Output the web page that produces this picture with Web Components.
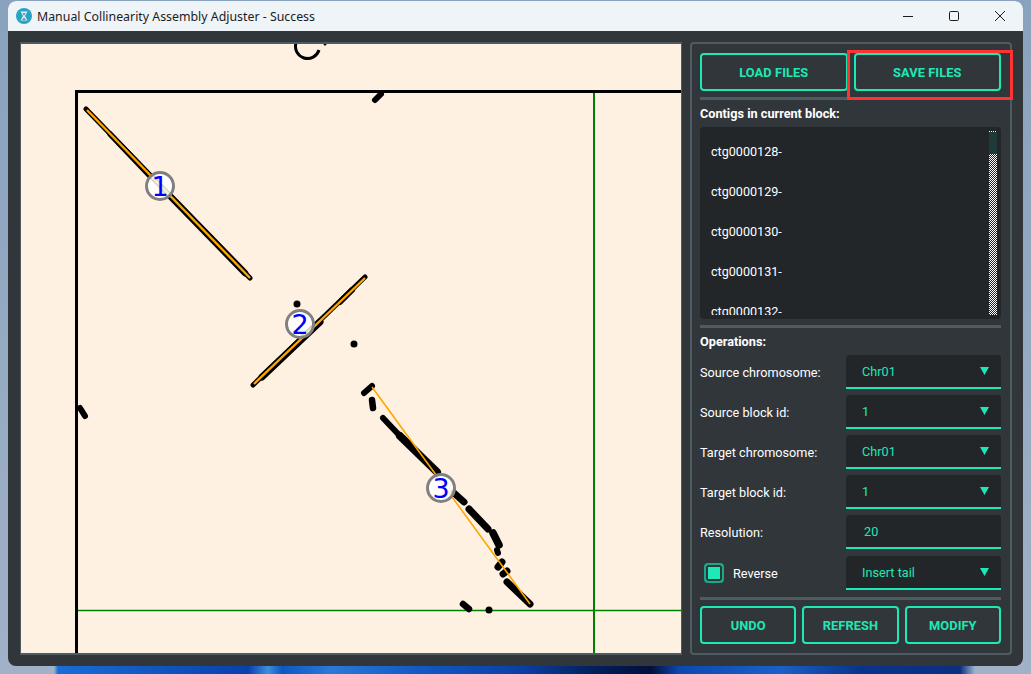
<!DOCTYPE html>
<html>
<head>
<meta charset="utf-8">
<title>Manual Collinearity Assembly Adjuster</title>
<style>
    html, body { margin: 0; height: 100%; overflow: hidden; }
    body {
        background:
            linear-gradient(90deg, transparent 54px, #1a6cd6 58px, #0f50bc 180px, #0a3fae 248px, #3d8fdc 268px, #0f56c4 282px, #2a78d8 330px, #1258c4 420px, #0b3fa8 520px, #04205f 590px, #020f3a 650px, #0d48b2 680px, #1a60c8 780px, #0a338c 860px, #0a2f80 960px, transparent 975px) 0 100% / 100% 8px no-repeat,
            linear-gradient(#89a2bd, #a0b1c8);
        font-family: Roboto, "Liberation Sans", sans-serif;
    }
</style>
</head>
<body>
<app-window>
    <span slot="title">Manual Collinearity Assembly Adjuster - Success</span>
    <plot-canvas slot="plot"></plot-canvas>
    <side-panel slot="panel">
        <div class="btn-row top">
            <md-button>LOAD FILES</md-button>
            <md-button>SAVE FILES</md-button>
        </div>
        <panel-rule></panel-rule>
        <panel-label>Contigs in current block:</panel-label>
        <contig-list>
            <contig-item>ctg0000128-</contig-item>
            <contig-item>ctg0000129-</contig-item>
            <contig-item>ctg0000130-</contig-item>
            <contig-item>ctg0000131-</contig-item>
            <contig-item>ctg0000132-</contig-item>
        </contig-list>
        <panel-rule></panel-rule>
        <panel-label>Operations:</panel-label>
        <form-row label="Source chromosome:"><md-combo value="Chr01"></md-combo></form-row>
        <form-row label="Source block id:"><md-combo value="1"></md-combo></form-row>
        <form-row label="Target chromosome:"><md-combo value="Chr01"></md-combo></form-row>
        <form-row label="Target block id:"><md-combo value="1"></md-combo></form-row>
        <form-row label="Resolution:"><md-input value="20"></md-input></form-row>
        <form-row class="last"><md-check slot="label">Reverse</md-check><md-combo value="Insert tail"></md-combo></form-row>
        <panel-rule></panel-rule>
        <div class="btn-row bottom">
            <md-button>UNDO</md-button>
            <md-button>REFRESH</md-button>
            <md-button>MODIFY</md-button>
        </div>
    </side-panel>
</app-window>

<script>
class AppWindow extends HTMLElement {
    constructor() {
        super();
        const shadowRoot = this.attachShadow({ mode: "open" });
        shadowRoot.innerHTML = `
            <style>
                :host {
                    display: flex;
                    flex-direction: column;
                    box-sizing: border-box;
                    width: 1015px;
                    height: 665px;
                    margin: 1px 0 0 8px;
                    border-radius: 8px;
                    overflow: hidden;
                    background: #31363b;
                }
                header {
                    flex: none;
                    display: flex;
                    align-items: center;
                    height: 30px;
                    background: #eff4f9;
                    color: #1c1c1c;
                    font: 12.35px "Noto Sans", "Open Sans", sans-serif;
                }
                .icon { margin: 0 5px 0 8px; flex: none; }
                .name { flex: 1; white-space: nowrap; }
                .ctl { display: flex; align-items: center; }
                .ctl div { width: 46px; height: 30px; display: flex; align-items: center; justify-content: center; }
                main {
                    flex: 1;
                    min-height: 0;
                    display: flex;
                    gap: 8px;
                    padding: 11px 11px 11px 12px;
                }
            </style>
            <header>
                <svg class="icon" width="16" height="16" viewBox="0 0 16 16">
                    <circle cx="8" cy="8" r="8" fill="#27a3c4"/>
                    <path d="M4.5 3.5h7L9 8l2.5 4.5h-7L7 8z" fill="#dff1f6"/>
                    <path d="M6.5 5h3L8 8z M8 9.5l2 2.5H6z" fill="#6f8fa8"/>
                </svg>
                <div class="name"><slot name="title"></slot></div>
                <div class="ctl">
                    <div><svg width="12" height="12" viewBox="0 0 12 12"><path d="M1 6.5h10" stroke="#1c1c1c" fill="none"/></svg></div>
                    <div><svg width="12" height="12" viewBox="0 0 12 12"><rect x="1.5" y="1.5" width="9" height="9" rx="1.2" stroke="#1c1c1c" fill="none"/></svg></div>
                    <div><svg width="12" height="12" viewBox="0 0 12 12"><path d="M1 1l10 10M11 1L1 11" stroke="#1c1c1c" fill="none"/></svg></div>
                </div>
            </header>
            <main>
                <slot name="plot"></slot>
                <slot name="panel"></slot>
            </main>
        `;
    }
}

class PlotCanvas extends HTMLElement {
    constructor() {
        super();
        const shadowRoot = this.attachShadow({ mode: "open" });
        const black = [
            [86, 109, 250, 278, 5], [170, 196, 245, 273, 6.5], [110, 134, 150, 176, 5.5],
            [253, 385, 365, 277, 5], [262, 377, 320, 322, 7], [340, 302, 352, 290, 6],
            [364, 393, 372, 386, 6], [372, 400, 373, 408, 6.5], [383, 418, 400, 436, 6], [400, 436, 437, 472, 8],
            [454, 493, 464, 502, 7], [469, 509, 488, 529, 7], [493, 533, 499, 545, 7.5],
            [497, 550, 498, 553, 6], [502, 562, 498, 567, 7], [507, 571, 503, 574, 7],
            [507, 582, 530, 604, 7], [463, 604, 469, 609, 6.5], [489, 610, 489, 610, 7],
            [297, 304, 297, 304, 7], [354, 344, 354, 344, 7], [80, 408, 85, 416, 6],
            [375, 100, 381, 94, 6], [325, 44, 325, 44, 3],
        ].map(([x1, y1, x2, y2, w]) =>
            `<line x1="${x1}" y1="${y1}" x2="${x2}" y2="${y2}" stroke-width="${w}"/>`).join("");
        const marks = [[160, 186, 1], [300, 324, 2], [441, 488, 3]].map(([x, y, n]) => `
            <circle cx="${x}" cy="${y}" r="13.5" fill="#fff" fill-opacity=".82" stroke="#808080" stroke-width="3"/>
            <text x="${x}" y="${y + 10}" text-anchor="middle" fill="#0000ff" font-family="DejaVu Sans" font-size="27">${n}</text>`).join("");
        shadowRoot.innerHTML = `
            <style>
                :host {
                    display: block;
                    box-sizing: border-box;
                    width: 662px;
                    height: 613px;
                    border: 1px solid #4f5b62;
                    border-width: 2px 1px;
                    background: #fff1e2;
                }
                svg { display: block; width: 100%; height: 100%; }
            </style>
            <svg viewBox="21 44 660 609">
                <path d="M76.5 660V91.5H690" fill="none" stroke="#000" stroke-width="3"/>
                <path d="M594 93V660" fill="none" stroke="#008000" stroke-width="2"/>
                <path d="M78 610.5H690" fill="none" stroke="#008000" stroke-width="1.3"/>
                <path d="M296 43A12 12 0 0 0 319 50" fill="none" stroke="#000" stroke-width="3"/>
                <g stroke="#000" stroke-linecap="round" fill="none">
                    ${black}
                </g>
                <g stroke="#ffa500" fill="none">
                    <line x1="87" y1="110" x2="250" y2="278" stroke-width="2.4"/>
                    <line x1="254" y1="384" x2="365" y2="278" stroke-width="2.4"/>
                    <line x1="372" y1="387" x2="530" y2="604" stroke-width="1.6"/>
                </g>
                ${marks}
            </svg>
        `;
    }
}

class SidePanel extends HTMLElement {
    constructor() {
        super();
        const shadowRoot = this.attachShadow({ mode: "open" });
        shadowRoot.innerHTML = `
            <style>
                :host {
                    display: flex;
                    flex-direction: column;
                    position: relative;
                    box-sizing: border-box;
                    width: 322px;
                    height: 613px;
                    padding: 9px 9px 9px 8px;
                    border: 2px solid #4f5b62;
                    border-radius: 4px;
                    color: #fff;
                    font-size: 13px;
                }
                ::slotted(.btn-row) { display: flex; flex: none; gap: 6px; }
                ::slotted(.top) { margin-bottom: 6px; }
                ::slotted(.bottom) { margin-top: 6px; }
                ::slotted(form-row) { margin-bottom: 6px; }
                ::slotted(.last) { margin-top: 1px; margin-bottom: 7px; }
                .flag {
                    position: absolute;
                    left: 155px;
                    top: 6px;
                    width: 166px;
                    height: 50px;
                    box-sizing: border-box;
                    border: 3px solid #f33;
                    pointer-events: none;
                }
            </style>
            <slot></slot>
            <div class="flag"></div>
        `;
    }
}

class MdButton extends HTMLElement {
    constructor() {
        super();
        const shadowRoot = this.attachShadow({ mode: "open" });
        shadowRoot.innerHTML = `
            <style>
                :host {
                    flex: 1;
                    display: flex;
                    align-items: center;
                    justify-content: center;
                    box-sizing: border-box;
                    height: 38px;
                    padding-top: 1px;
                    border: 2px solid #1de9b6;
                    border-radius: 4px;
                    color: #1de9b6;
                    font-weight: 700;
                    font-size: 12.8px;
                    letter-spacing: .1px;
                }
            </style>
            <slot></slot>
        `;
    }
}

class PanelRule extends HTMLElement {
    constructor() {
        super();
        const shadowRoot = this.attachShadow({ mode: "open" });
        shadowRoot.innerHTML = `
            <style>
                :host { display: block; flex: none; height: 3px; background: #4f5b62; }
            </style>
        `;
    }
}

class PanelLabel extends HTMLElement {
    constructor() {
        super();
        const shadowRoot = this.attachShadow({ mode: "open" });
        shadowRoot.innerHTML = `
            <style>
                :host {
                    display: flex;
                    align-items: center;
                    flex: none;
                    height: 27px;
                    font-weight: 700;
                    font-size: 12.7px;
                }
            </style>
            <slot></slot>
        `;
    }
}

class ContigList extends HTMLElement {
    constructor() {
        super();
        const shadowRoot = this.attachShadow({ mode: "open" });
        shadowRoot.innerHTML = `
            <style>
                :host {
                    display: flex;
                    flex: none;
                    box-sizing: border-box;
                    height: 192px;
                    margin-bottom: 6px;
                    padding: 4px 4px 4px 0;
                    background: #232629;
                    border-radius: 4px;
                }
                .items { flex: 1; overflow: hidden; }
                .bar {
                    flex: none;
                    width: 8px;
                    display: flex;
                    flex-direction: column;
                }
                .dots {
                    height: 1px;
                    background: repeating-linear-gradient(90deg, #fff 0 1px, #232629 1px 2px);
                }
                .thumb { height: 22px; background: #1f3a38; }
                .track {
                    flex: 1;
                    background: repeating-conic-gradient(#fff 0 25%, #232629 0 50%) 0 0 / 2px 2px;
                }
            </style>
            <div class="items"><slot></slot></div>
            <div class="bar"><div class="dots"></div><div class="thumb"></div><div class="track"></div></div>
        `;
    }
}

class ContigItem extends HTMLElement {
    constructor() {
        super();
        const shadowRoot = this.attachShadow({ mode: "open" });
        shadowRoot.innerHTML = `
            <style>
                :host {
                    display: flex;
                    align-items: center;
                    height: 40px;
                    padding-left: 11px;
                    font-size: 12.6px;
                    color: #fff;
                }
            </style>
            <slot></slot>
        `;
    }
}

class FormRow extends HTMLElement {
    constructor() {
        super();
        const shadowRoot = this.attachShadow({ mode: "open" });
        shadowRoot.innerHTML = `
            <style>
                :host {
                    display: flex;
                    flex: none;
                    align-items: center;
                    justify-content: space-between;
                    height: 34px;
                    font-size: 12.7px;
                }
            </style>
            <slot name="label"><span></span></slot>
            <slot></slot>
        `;
        shadowRoot.querySelector("span").textContent = this.getAttribute("label") || "";
    }
}

class MdCombo extends HTMLElement {
    constructor() {
        super();
        const shadowRoot = this.attachShadow({ mode: "open" });
        shadowRoot.innerHTML = `
            <style>
                :host {
                    display: flex;
                    align-items: center;
                    justify-content: space-between;
                    box-sizing: border-box;
                    width: 155px;
                    height: 34px;
                    padding: 0 12px 0 16px;
                    background: #232629;
                    border-bottom: 2px solid #1de9b6;
                    border-radius: 4px 4px 0 0;
                    color: #1de9b6;
                    font-size: 12.7px;
                }
                svg { display: block; }
            </style>
            <span></span>
            <svg width="9" height="8" viewBox="0 0 9 8"><path d="M0 0h9L4.5 8z" fill="#1de9b6"/></svg>
        `;
        shadowRoot.querySelector("span").textContent = this.getAttribute("value");
    }
}

class MdInput extends HTMLElement {
    constructor() {
        super();
        const shadowRoot = this.attachShadow({ mode: "open" });
        shadowRoot.innerHTML = `
            <style>
                :host {
                    display: flex;
                    align-items: center;
                    box-sizing: border-box;
                    width: 155px;
                    height: 34px;
                    padding: 0 0 0 18px;
                    background: #232629;
                    border-bottom: 2px solid #1de9b6;
                    border-radius: 4px 4px 0 0;
                    color: #1de9b6;
                    font-size: 12.7px;
                }
            </style>
            <span></span>
        `;
        shadowRoot.querySelector("span").textContent = this.getAttribute("value");
    }
}

class MdCheck extends HTMLElement {
    constructor() {
        super();
        const shadowRoot = this.attachShadow({ mode: "open" });
        shadowRoot.innerHTML = `
            <style>
                :host {
                    display: flex;
                    align-items: center;
                    gap: 9px;
                    padding-left: 4px;
                    font-size: 12.7px;
                }
                .box {
                    box-sizing: border-box;
                    width: 20px;
                    height: 20px;
                    border: 2px solid #18a98a;
                    border-radius: 4px;
                    background: #1de9b6;
                    box-shadow: inset 0 0 0 2px #31363b;
                }
            </style>
            <div class="box"></div>
            <slot></slot>
        `;
    }
}

window.customElements.define("app-window", AppWindow);
window.customElements.define("plot-canvas", PlotCanvas);
window.customElements.define("side-panel", SidePanel);
window.customElements.define("md-button", MdButton);
window.customElements.define("panel-rule", PanelRule);
window.customElements.define("panel-label", PanelLabel);
window.customElements.define("contig-list", ContigList);
window.customElements.define("contig-item", ContigItem);
window.customElements.define("form-row", FormRow);
window.customElements.define("md-combo", MdCombo);
window.customElements.define("md-input", MdInput);
window.customElements.define("md-check", MdCheck);
</script>
</body>
</html>
